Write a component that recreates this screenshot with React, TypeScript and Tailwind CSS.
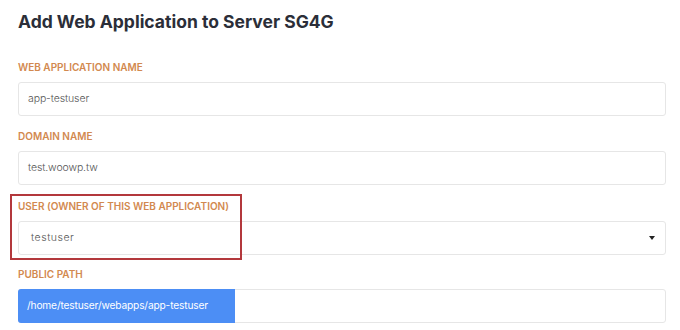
import { ReactNode } from "react";

function Label({ children }: { children: ReactNode }) {
    return (
        <div className="h-[14px] leading-[14px] text-[10px] font-semibold uppercase text-[#d2894f]">
            {children}
        </div>
    );
}

function Field({ children, className = "" }: { children: ReactNode; className?: string }) {
    return (
        <div className={`mt-2 h-[34px] w-[648px] flex items-center rounded-[3px] border border-[#e6e6e6] bg-white text-[#555] ${className}`}>
            {children}
        </div>
    );
}

export default function App() {
    return (
        <div className="relative w-[680px] h-[330px] bg-white overflow-hidden px-[18px] pt-2" style={{ fontFamily: "Inter, 'Noto Sans', sans-serif" }}>
            {/* title */}
            <h1 className="h-[28px] leading-[28px] text-[17.5px] font-bold text-[#2b2e38]">
                Add Web Application to Server SG4G
            </h1>

            <div className="mt-[24px]">
                <Label>Web Application Name</Label>
                <Field><span className="pl-[9px] text-[10.5px] font-light tracking-[-0.01em]">app-testuser</span></Field>
            </div>

            <div className="mt-[13px]">
                <Label>Domain Name</Label>
                <Field><span className="pl-[9px] text-[10.5px] font-light tracking-[-0.01em]">test.woowp.tw</span></Field>
            </div>

            <div className="mt-[14px]">
                <Label>User (Owner of this web application)</Label>
                <Field className="justify-between">
                    <span className="pl-[12px] text-[10.5px] font-light tracking-[0.05em]">testuser</span>
                    <svg width="6" height="4" viewBox="0 0 6 4" className="mr-[10px]">
                        <path d="M0 0 H6 L3 4 Z" fill="#222" />
                    </svg>
                </Field>
            </div>

            <div className="mt-[12px]">
                <Label>Public Path</Label>
                <Field className="items-stretch">
                    <div className="w-[217px] -m-px flex items-center whitespace-nowrap rounded-l-[3px] bg-[#4c8ef5] pl-[9px] text-[10.2px] tracking-[-0.015em] text-white">
                        /home/testuser/webapps/app-testuser
                    </div>
                </Field>
            </div>

            {/* annotation box */}
            <div className="absolute left-[10px] top-[194px] w-[232px] h-[66px] border-2 border-[#b3383c]" />
        </div>
    );
}
